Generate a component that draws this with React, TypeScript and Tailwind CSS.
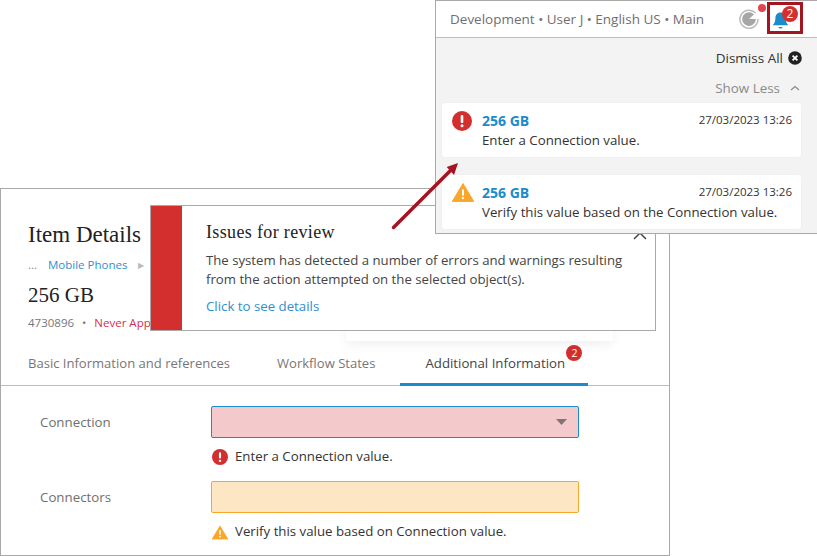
const uiFont = "font-['Open_Sans','Noto_Sans',sans-serif]";
const serifFont = "font-['Liberation_Serif','DejaVu_Serif',serif]";

function ErrorIcon({ size }: { size: number }) {
  return (
    <svg width={size} height={size} viewBox="0 0 20 20" className="shrink-0">
      <circle cx="10" cy="10" r="10" fill="#d32f2f" />
      <rect x="8.7" y="4" width="2.6" height="8" rx="1" fill="#fff" />
      <circle cx="10" cy="14.8" r="1.5" fill="#fff" />
    </svg>
  );
}

function WarningIcon({ width, height }: { width: number; height: number }) {
  return (
    <svg width={width} height={height} viewBox="0 0 22 19" className="shrink-0">
      <path d="M11 0.5 L21.8 18.6 L0.2 18.6 Z" fill="#f9a72b" stroke="#f9a72b" strokeLinejoin="round" />
      <rect x="10" y="6.5" width="2" height="6" fill="#fff" />
      <circle cx="11" cy="15" r="1.2" fill="#fff" />
    </svg>
  );
}

function NotificationCard({
  icon,
  message,
}: {
  icon: React.ReactNode;
  message: string;
}) {
  return (
    <div className="flex h-[54px] rounded-[3px] bg-white pl-[10px] pr-[9px] shadow-[0_0_2px_rgba(0,0,0,0.06)]">
      <div className="flex w-[30px] shrink-0 justify-start pt-[8px]">{icon}</div>
      <div className="min-w-0 flex-1 pt-[8px]">
        <div className="flex items-start justify-between">
          <span className="text-[14px] font-bold leading-[20px] text-[#1b8ccb]">256 GB</span>
          <span className="mt-px text-[11.5px] leading-[16px] text-[#333]">27/03/2023 13:26</span>
        </div>
        <div className="text-[13.25px] leading-[18px] text-[#333]">{message}</div>
      </div>
    </div>
  );
}

function NotificationPanel() {
  return (
    <div className="absolute left-[435px] top-0 z-30 flex h-[234px] w-[382px] flex-col border-b border-l border-t border-[#a9a9a9] bg-[#f3f3f3]">
      <div className="flex h-[37px] shrink-0 items-start justify-between border-b border-[#bdbdbd] bg-white pl-[14px] pr-[14px]">
        <span className="self-center text-[13.5px] text-[#6f6f6f]">Development • User J • English US • Main</span>
        <div className="flex items-start gap-[8px]">
          <div className="relative mt-[8px] h-[20px] w-[20px]">
            <svg width="20" height="20" viewBox="0 0 20 20">
              <path d="M16.5 4 A9 9 0 1 0 19 10" fill="none" stroke="#bdbdbd" strokeWidth="1.6" />
              <path d="M10 10 L15 5.5 A6.8 6.8 0 1 0 16.8 10 Z" fill="#a6a6a6" />
            </svg>
            <span className="absolute right-[-7px] top-[-5px] h-[8px] w-[8px] rounded-full bg-[#e0474c]" />
          </div>
          <div className="relative mt-px h-[32px] w-[36px] border-[3px] border-[#a31621]">
            <svg width="17" height="21" viewBox="0 0 20 22" className="ml-[2px] mt-[5px]">
              <path d="M10 1.5 C6 1.5 4 4.5 4 8 C4 12.5 2.5 14.5 0.8 16.5 L19.2 16.5 C17.5 14.5 16 12.5 16 8 C16 4.5 14 1.5 10 1.5 Z" fill="#1b8ccb" />
              <path d="M7.5 18.5 L12.5 18.5 C12 20 11 20.5 10 20.5 C9 20.5 8 20 7.5 18.5 Z" fill="#1b8ccb" />
            </svg>
            <span className="absolute left-[12px] top-[1px] flex h-[16px] w-[16px] items-center justify-center rounded-full bg-[#d32f2f] text-[12px] leading-none text-white">
              2
            </span>
          </div>
        </div>
      </div>
      <div className="flex flex-col pl-[6px] pr-[16px]">
        <div className="flex h-[40px] items-center justify-end gap-[5px] text-[13.5px] text-[#333]">
          Dismiss All
          <svg width="14" height="14" viewBox="0 0 14 14" className="mr-[-1px]">
            <circle cx="7" cy="7" r="6.8" fill="#222" />
            <path d="M4.6 4.6 L9.4 9.4 M9.4 4.6 L4.6 9.4" stroke="#fff" strokeWidth="1.8" />
          </svg>
        </div>
        <div className="flex h-[20px] items-center justify-end gap-[10px] pr-px text-[13.4px] text-[#8a8a8a]">
          Show Less
          <svg width="10" height="6" viewBox="0 0 10 6">
            <path d="M1 5 L5 1.5 L9 5" fill="none" stroke="#8a8a8a" strokeWidth="1.2" />
          </svg>
        </div>
        <div className="mt-[5px] flex flex-col gap-[18px]">
          <NotificationCard icon={<ErrorIcon size={20} />} message="Enter a Connection value." />
          <NotificationCard icon={<WarningIcon width={22} height={19} />} message="Verify this value based on the Connection value." />
        </div>
      </div>
    </div>
  );
}

function IssuesPopup() {
  return (
    <>
      <div className="absolute left-[346px] top-[300px] z-10 h-[41px] w-[267px] bg-white shadow-[0_4px_10px_rgba(0,0,0,0.06)]" />
      <div className="absolute left-[150px] top-[205px] z-20 flex h-[126px] w-[506px] border border-[#a9a9a9] bg-white">
        <div className="w-[31px] shrink-0 bg-[#d32f2f]" />
        <div className="relative flex-1 pl-[24px] pt-[15px]">
          <div className={`${serifFont} text-[18px] leading-[22px] tracking-[0.35px] text-[#222]`}>Issues for review</div>
          <p className="mt-[8px] w-[430px] text-[13.2px] leading-[19px] text-[#444]">
            The system has detected a number of errors and warnings resulting from the action attempted on the selected object(s).
          </p>
          <div className="mt-[8px] text-[13.25px] leading-[18px] text-[#2f8fd0]">Click to see details</div>
          <svg width="14" height="14" viewBox="0 0 14 14" className="absolute right-[8px] top-[20px]">
            <path d="M1 1 L13 13 M13 1 L1 13" stroke="#444" strokeWidth="1.5" />
          </svg>
        </div>
      </div>
    </>
  );
}

function FormRow({
  label,
  fieldClass,
  icon,
  message,
  arrow,
}: {
  label: string;
  fieldClass: string;
  icon: React.ReactNode;
  message: string;
  arrow?: boolean;
}) {
  return (
    <div className="flex">
      <div className="w-[210px] shrink-0 pl-[39px] pt-[6px] text-[13.3px] leading-[20px] text-[#6f6f6f]">{label}</div>
      <div className="w-[368px]">
        <div className={`flex h-[32px] items-center justify-end rounded-[2px] border pr-[11px] ${fieldClass}`}>
          {arrow && (
            <svg width="11" height="6" viewBox="0 0 11 6">
              <path d="M0 0 L11 0 L5.5 6 Z" fill="#807476" />
            </svg>
          )}
        </div>
        <div className="mt-[9px] flex h-[20px] items-center gap-[7px] pl-[1px] text-[13.25px] text-[#333]">
          {icon}
          {message}
        </div>
      </div>
    </div>
  );
}

function ItemPanel() {
  return (
    <div className="absolute left-0 top-[188px] flex h-[368px] w-[670px] flex-col border border-[#a9a9a9] bg-white">
      <div className="h-[162px] shrink-0 pl-[27px] pt-[32px]">
        <h1 className={`${serifFont} text-[23px] leading-[28px] text-[#222]`}>Item Details</h1>
        <div className="mt-[8px] flex h-[16px] items-center text-[11.5px] text-[#2f8fd0]">
          <span className="w-[20px] text-[#888]">...</span>
          Mobile Phones
          <span className="ml-[11px] text-[8px] text-[#bbb]">▶</span>
        </div>
        <div className={`${serifFont} mt-[9px] text-[21px] leading-[26px] text-[#222]`}>256 GB</div>
        <div className="mt-[7px] flex h-[16px] items-center text-[11.5px]">
          <span className="text-[#777]">4730896</span>
          <span className="mx-[8px] text-[#777]">•</span>
          <span className="text-[#d32f4f]">Never Approved</span>
        </div>
      </div>
      <div className="flex h-[35px] shrink-0 border-b border-[#bdbdbd] pl-[27px] text-[13.05px] text-[#777]">
        <div className="pt-[2px] leading-[20px]">Basic Information and references</div>
        <div className="ml-[47px] pt-[2px] leading-[20px]">Workflow States</div>
        <div className="relative ml-[25px] mb-[-1px] w-[188px] border-b-[3px] border-[#1b8ccb] pl-[25px] pt-[2px] text-[13.25px] leading-[20px] text-[#444]">
          Additional Information
          <span className="absolute right-[6px] top-[-6px] flex h-[16px] w-[16px] items-center justify-center rounded-full bg-[#d32f2f] text-[10.5px] leading-none text-white">
            2
          </span>
        </div>
      </div>
      <div className="flex flex-col gap-[14px] pt-[20px]">
        <FormRow
          label="Connection"
          fieldClass="border-[#1b8ccb] bg-[#f4c9cb]"
          icon={<ErrorIcon size={16} />}
          message="Enter a Connection value."
          arrow
        />
        <FormRow
          label="Connectors"
          fieldClass="border-[#f9a72b] bg-[#fde6c4]"
          icon={<WarningIcon width={16} height={15} />}
          message="Verify this value based on Connection value."
        />
      </div>
    </div>
  );
}

export default function App() {
  return (
    <div className={`${uiFont} relative h-[556px] w-[817px] overflow-hidden bg-white`}>
      <ItemPanel />
      <IssuesPopup />
      <NotificationPanel />
      <svg width="80" height="80" viewBox="0 0 80 80" className="absolute left-[385px] top-[155px] z-40">
        <path d="M8.5 72.5 L65 16" stroke="#a31621" strokeWidth="3.5" strokeLinecap="round" />
        <path d="M73 8 L61.7 12 L69 20 Z" fill="#a31621" />
      </svg>
    </div>
  );
}
